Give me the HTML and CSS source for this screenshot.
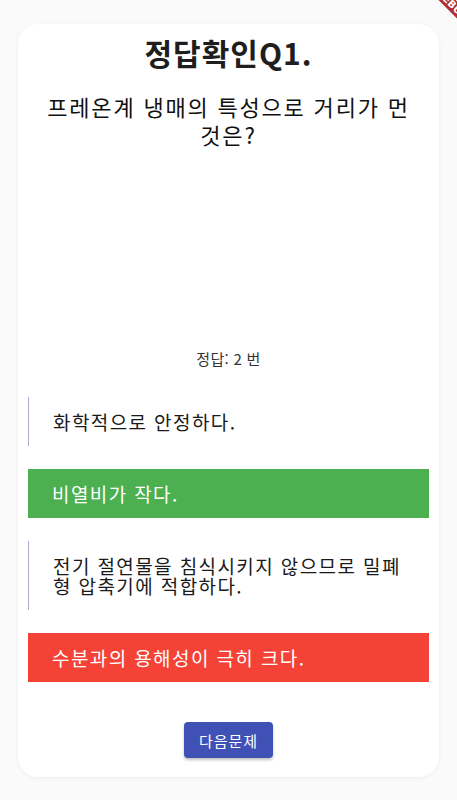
FILE: index.html
```html
<!DOCTYPE html>
<html lang="ko">
<head>
  <meta charset="UTF-8">
  <title>정답확인</title>
  <meta name="viewport" content="width=device-width, initial-scale=1.0">
  <link rel="stylesheet" href="styles.css">
</head>
<body>

  <div class="card">
    <h1>정답확인Q1.</h1>
    <p class="question">프레온계 냉매의 특성으로 거리가 먼 것은?</p>

    <!-- 이미지 자리 (비어 있음) -->
    <div class="image-area"></div>

    <div class="answer">정답: 2 번</div>

    <div class="options">
      <div class="option">화학적으로 안정하다.</div>
      <div class="option correct">비열비가 작다.</div>
      <div class="option">전기 절연물을 침식시키지 않으므로 밀폐형 압축기에 적합하다.</div>
      <div class="option wrong">수분과의 용해성이 극히 크다.</div>
    </div>

    <div class="actions">
      <button class="next-btn">다음문제</button>
    </div>
  </div>

  <div class="debug-corner">
    <div class="debug-band">DEBUG</div>
  </div>

</body>
</html>
```

FILE: styles.css
```css
* { box-sizing: border-box; margin: 0; padding: 0; }

html, body {
  overflow: hidden;
}

body {
  font-family: "Noto Sans CJK KR", "Noto Sans", sans-serif;
  background: #fafafa;
  color: #222;
  padding: 24px 18px 25px;
  height: 100vh;
}

.card {
  background: #fff;
  border-radius: 20px;
  box-shadow: 0 1px 4px rgba(0,0,0,0.05);
  padding: 8px 10px 19px;
}

h1 {
  text-align: center;
  font-size: 30px;
  line-height: 40px;
  font-weight: 700;
  letter-spacing: 1px;
  color: #1e1e1e;
}

.question {
  margin-top: 20px;
  text-align: center;
  font-size: 22px;
  line-height: 28px;
  letter-spacing: 1.8px;
  color: #111;
  padding: 0 12px;
}

.image-area {
  height: 201px;
}

.answer {
  text-align: center;
  font-size: 15px;
  line-height: 20px;
  letter-spacing: 0.3px;
  color: #333;
}

.options {
  margin-top: 28px;
  display: flex;
  flex-direction: column;
  gap: 23px;
}

.option {
  font-size: 19px;
  line-height: 20px;
  letter-spacing: 1.4px;
  padding: 14.5px 24px;
  border-left: 1px solid #a9aed0;
  color: #1a1a1a;
}

.option.correct {
  background: #4caf50;
  color: #fff;
  border-left: none;
}

.option.wrong {
  background: #f44336;
  color: #fff;
  border-left: none;
}

.actions {
  margin-top: 40px;
  display: flex;
  justify-content: center;
}

.next-btn {
  font-family: inherit;
  background: #3f51b5;
  color: #fff;
  font-size: 15px;
  letter-spacing: 1px;
  height: 36px;
  padding: 0 15px;
  border: none;
  border-radius: 4px;
  box-shadow: 0 2px 3px rgba(0,0,0,0.25);
  cursor: pointer;
}

.debug-corner {
  position: absolute;
  top: 0;
  right: 0;
  width: 40px;
  height: 40px;
  overflow: hidden;
}

.debug-band {
  position: absolute;
  left: -5px;
  top: -1px;
  width: 80px;
  height: 12px;
  transform: rotate(45deg);
  background: #b22f2f;
  color: #fff;
  font-family: "DejaVu Sans", sans-serif;
  font-size: 10px;
  font-weight: 700;
  line-height: 12px;
  text-align: center;
}
```
